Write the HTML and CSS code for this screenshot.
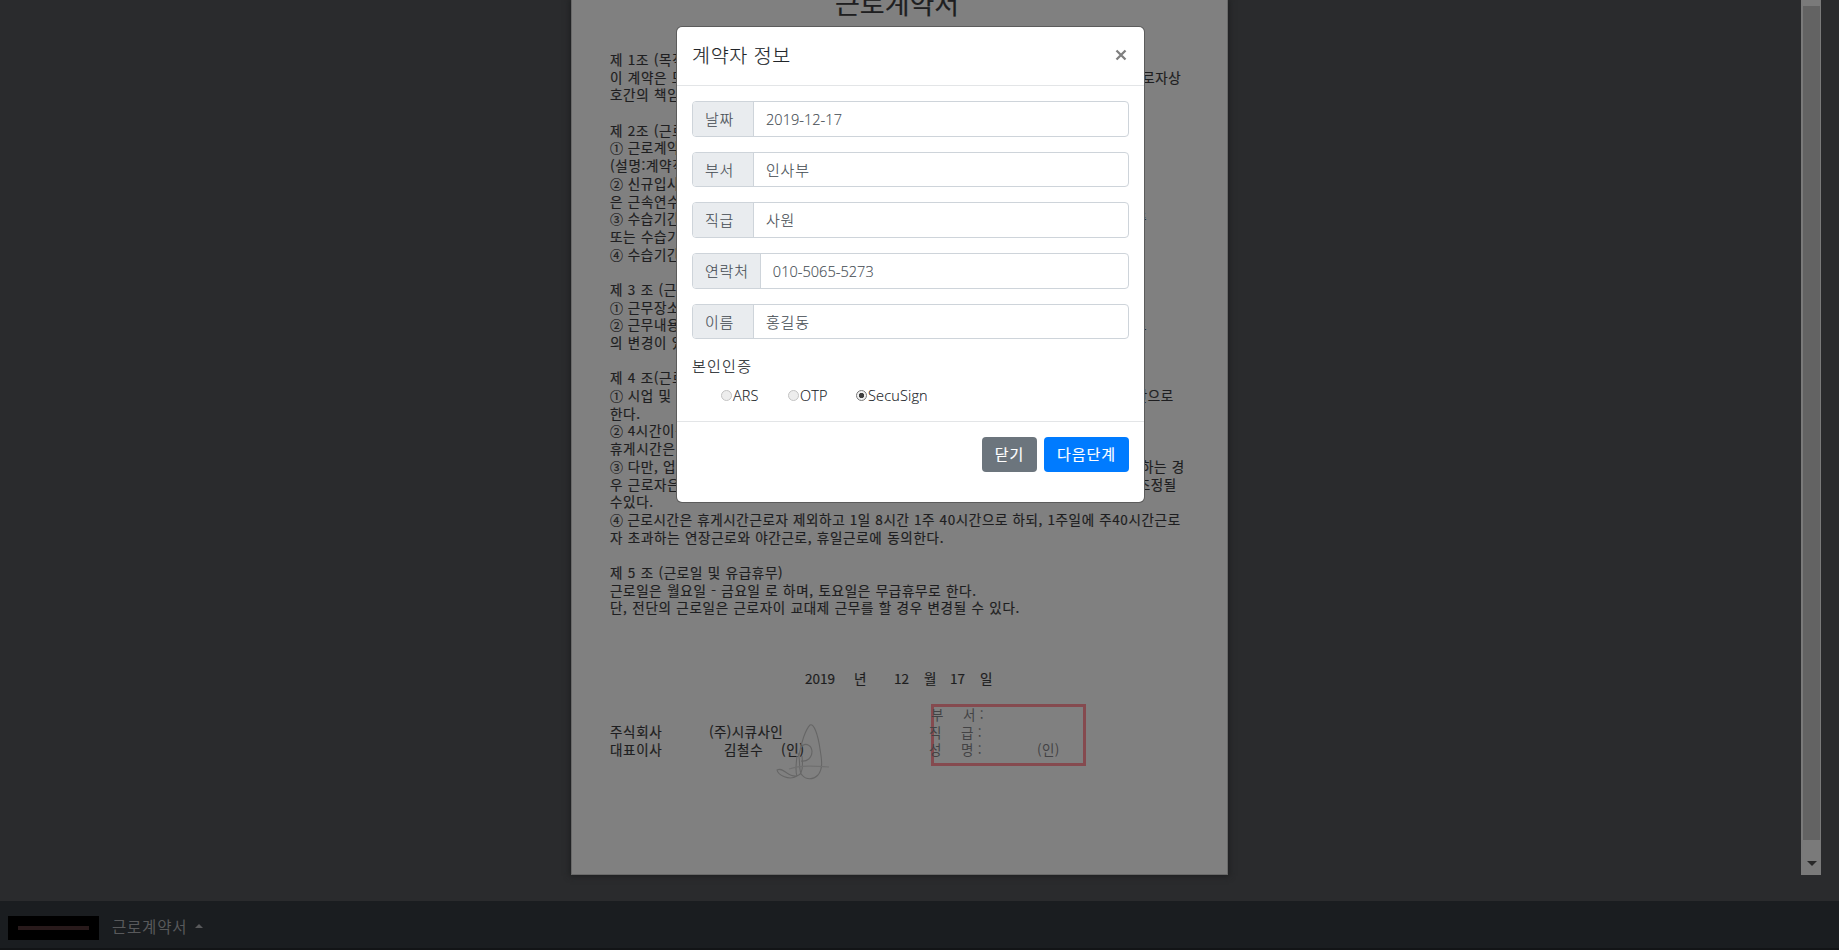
FILE: index.html
```html
<!DOCTYPE html>
<html lang="ko">
<head>
<meta charset="utf-8">
<title>근로계약서</title>
<link rel="stylesheet" href="styles.css">
</head>
<body>
<div class="app">
  <main class="viewer">
    <article class="page">
      <h1 class="title">근로계약서</h1>
      <p class="ln">제 1조 (목적)</p>
      <p class="ln split"><span>이 계약은 모</span><span>로자상</span></p>
      <p class="ln">호간의 책임</p>
      <p class="ln"></p>
      <p class="ln">제 2조 (근로</p>
      <p class="ln"><i class="num">①</i> 근로계약</p>
      <p class="ln">(설명:계약직</p>
      <p class="ln"><i class="num">②</i> 신규입사</p>
      <p class="ln">은 근속연수</p>
      <p class="ln split to-1148"><span><i class="num">③</i> 수습기간</span><span>중</span></p>
      <p class="ln">또는 수습기</p>
      <p class="ln"><i class="num">④</i> 수습기간</p>
      <p class="ln"></p>
      <p class="ln">제 3 조 (근로</p>
      <p class="ln"><i class="num">①</i> 근무장소</p>
      <p class="ln split to-1148"><span><i class="num">②</i> 근무내용</span><span>로</span></p>
      <p class="ln">의 변경이 있</p>
      <p class="ln"></p>
      <p class="ln">제 4 조(근로</p>
      <p class="ln split to-1174"><span><i class="num">①</i> 시업 및</span><span>간으로</span></p>
      <p class="ln">한다.</p>
      <p class="ln"><i class="num">②</i> 4시간이상</p>
      <p class="ln">휴게시간은</p>
      <p class="ln split to-1185"><span><i class="num">③</i> 다만, 업무</span><span>하는 경</span></p>
      <p class="ln split to-1177"><span>우 근로자은</span><span>조정될</span></p>
      <p class="ln">수있다.</p>
      <p class="ln dense"><i class="num">④</i> 근로시간은 휴게시간근로자 제외하고 1일 8시간 1주 40시간으로 하되, 1주일에 주40시간근로</p>
      <p class="ln">자 초과하는 연장근로와 야간근로, 휴일근로에 동의한다.</p>
      <p class="ln"></p>
      <p class="ln">제 5 조 (근로일 및 유급휴무)</p>
      <p class="ln">근로일은 월요일 - 금요일 로 하며, 토요일은 무급휴무로 한다.</p>
      <p class="ln">단, 전단의 근로일은 근로자이 교대제 근무를 할 경우 변경될 수 있다.</p>
      <div class="date"><span>2019</span><span>년</span><span>12</span><span>월</span><span>17</span><span>일</span></div>
      <section class="parties">
        <div class="company">
          <div class="ln party"><span>주식회사</span><span class="firm">(주)시큐사인</span></div>
          <div class="ln party"><span>대표이사</span><span class="ceo">김철수</span><span>(인)</span></div>
          <svg class="sign" viewBox="0 0 56 60" width="56" height="60">
            <path d="M24 36C26 22 31 9 35 5c4-2 8 10 10 24 2 12 3 20-2 26-5 5-12 5-16 0-4-4-1-14-4-22 M22 36c-1 9-2 16 0 20 6-1 6-11 5-20 M26 28c3-6 10-4 11 3 0 7-5 11-11 10 M22 56c-8 5-19-1-20-6 6-4 11 8 20 6"/>
            <path class="faint" d="M14 49c12-4 26-3 40-2"/>
          </svg>
        </div>
        <div class="signer">
          <div class="ln field"><span>부</span><span>서 :</span></div>
          <div class="ln field shift"><span>직</span><span>급 :</span></div>
          <div class="ln field shift"><span>성</span><span>명 :</span><span class="seal">(인)</span></div>
        </div>
      </section>
    </article>
    <div class="scrollbar"><div class="thumb"></div><i class="down"></i></div>
  </main>
  <nav class="navbar">
    <div class="logo"><i></i></div>
    <span class="nav-link">근로계약서</span><i class="caret"></i>
  </nav>
</div>

<div class="modal">
  <header class="modal-header">
    <h2>계약자 정보</h2>
    <svg width="12" height="12" viewBox="0 0 12 12"><path d="M1.500 1.500l9 9M10.500 1.500l-9 9"/></svg>
  </header>
  <div class="modal-body">
    <div class="group"><label>날짜</label><div class="control latin">2019-12-17</div></div>
    <div class="group"><label>부서</label><div class="control">인사부</div></div>
    <div class="group"><label>직급</label><div class="control">사원</div></div>
    <div class="group"><label>연락처</label><div class="control latin">010-5065-5273</div></div>
    <div class="group"><label>이름</label><div class="control">홍길동</div></div>
    <div class="auth">본인인증</div>
    <div class="radios">
      <span class="opt"><i class="radio"></i>ARS</span>
      <span class="opt"><i class="radio"></i>OTP</span>
      <span class="opt"><i class="radio on"></i>SecuSign</span>
    </div>
  </div>
  <footer class="modal-footer">
    <span class="btn gray">닫기</span>
    <span class="btn blue">다음단계</span>
  </footer>
</div>
</body>
</html>
```
FILE: styles.css
```css
* { box-sizing: border-box; }
body {
  margin: 0;
  overflow: hidden;
  background: #2a2b2d;
  font-family: "Open Sans", "Noto Sans CJK KR", sans-serif;
}
h1, h2, p { margin: 0; font-weight: 400; }
i { font-style: normal; }
.app { height: 950px; display: flex; flex-direction: column; }
.viewer {
  height: 901px;
  display: flex;
  justify-content: space-between;
  padding: 0 18px 26px 571px;
}

/* Contract sheet */
.page {
  width: 657px;
  height: 875px;
  padding-left: 38px;
  overflow: hidden;
  background: #808080;
  border: 1px solid #696969;
  border-top: 0;
  box-shadow: 0 0 6px 1px #1c1d1f;
  color: #1e1e20;
  font-family: "Noto Sans CJK KR", sans-serif;
  font-size: 13.5px;
  -webkit-text-stroke: .2px;
}
.title {
  height: 40px;
  margin: -17px 0 28px 225px;
  font-size: 27px;
  line-height: 40px;
  white-space: nowrap;
}
.ln {
  height: 17.700px;
  line-height: 17.700px;
  letter-spacing: .7px;
  word-spacing: .2px;
  white-space: pre;
}
.dense { letter-spacing: .64px; word-spacing: 0; }
.split { display: flex; justify-content: space-between; width: 571.500px; }
.to-1148 { width: 537px; }
.to-1174 { width: 564px; }
.to-1185 { width: 575px; }
.to-1177 { width: 567px; }
.num { display: inline-block; width: 13px; font-size: 13px; }
.date {
  display: grid;
  grid-template-columns: 49px 40px 30px 26px 30px 20px;
  margin: 52px 0 0 195px;
  line-height: 18px;
}
.parties { display: flex; margin-top: 17px; }
.company { position: relative; width: 321px; padding-top: 19px; }
.party { display: flex; }
.party span:first-child { width: 99px; }
.firm { letter-spacing: .4px; }
.party .ceo { width: 57px; margin-left: 15px; }
.sign { position: absolute; left: 165px; top: 16px; fill: none; stroke: #666; stroke-width: 1.1; }
.faint { stroke: #707070; }
.signer {
  width: 155px;
  height: 62px;
  border: 3px solid #854a4f;
  color: #434345;
  -webkit-text-stroke: 0;
}
.field { display: flex; margin-left: -3px; position: relative; top: -1px; word-spacing: -.8px; }
.field span:first-child { width: 32px; }
.field span:nth-child(2) { width: 24px; }
.shift { margin-left: -5px; }
.field .seal { margin-left: 52px; letter-spacing: .4px; }

/* Scrollbar */
.scrollbar {
  width: 20px;
  height: 875px;
  padding: 6px 1px 0 2px;
  background: #7a7a7a;
}
.thumb { height: 834px; background: #636363; }
.down {
  display: block;
  width: 0;
  margin: 21px auto 0;
  border: 5px solid transparent;
  border-top-color: #282828;
  border-bottom: 0;
}

/* Bottom bar */
.navbar {
  height: 49px;
  display: flex;
  align-items: center;
  padding: 2px 8px 0;
  background: #1a1d20;
  border-bottom: 2px solid #121416;
  color: #58595b;
}
.logo { width: 91px; height: 24px; margin-top: 5px; padding: 10px; background: #000; }
.logo i { display: block; height: 4px; background: #281a1b; }
.nav-link { margin: 1px 8px 0 13px; font-size: 15.5px; letter-spacing: .8px; }
.caret { border: 4px solid transparent; border-bottom-color: #58595b; border-top: 0; }

/* Dialog */
.modal {
  position: absolute;
  left: 677px;
  top: 27px;
  width: 467px;
  height: 475px;
  background: #fff;
  border-radius: 5px;
  box-shadow: 0 0 0 1px #5c5c5c;
  color: #212529;
  font-size: 15px;
  -webkit-text-stroke: .15px;
}
.modal-header {
  height: 59px;
  display: flex;
  justify-content: space-between;
  align-items: center;
  padding: 0 17px 3px 15px;
  border-bottom: 1px solid #e3e5e7;
}
.modal-header h2 { font-size: 19.5px; font-weight: 300; letter-spacing: .7px; }
.modal-header svg { stroke: #7f7f7f; stroke-width: 2.3; }
.modal-body { height: 336px; padding: 15px 15px 0; border-bottom: 1px solid #e3e5e7; }
.group {
  display: flex;
  height: 35.600px;
  margin-bottom: 15.100px;
  border: 1px solid #ced4da;
  border-radius: 4px;
  color: #495057;
  font-weight: 300;
  line-height: 35px;
  letter-spacing: .8px;
}
.group label {
  min-width: 61px;
  padding: 0 11px 0 12px;
  background: #e9ecef;
  border-right: 1px solid #ced4da;
  border-radius: 3px 0 0 3px;
}
.control { flex: 1; padding-left: 12px; }
.control.latin { font-size: 14.500px; letter-spacing: .04px; }
.auth { padding-top: 1px; line-height: 22px; letter-spacing: 1.250px; font-weight: 300; }
.radios { display: flex; padding: 8px 0 0 29px; font-size: 14.500px; line-height: 22px; font-weight: 300; }
.opt { display: flex; align-items: center; flex: none; min-width: 67px; letter-spacing: .15px; }
.radio {
  flex: none;
  width: 11px;
  height: 11px;
  margin: -2px 1px 0 0;
  border: 1px solid #c4c4c4;
  border-radius: 50%;
  background: #ededed;
}
.radio.on { margin-left: 1px; border-color: #777; background: radial-gradient(circle, #3e3e3e 2.3px, #f0f0f0 3px); }
.modal-footer { display: flex; justify-content: flex-end; gap: 7px; padding: 15px; }
.btn {
  height: 35px;
  border-radius: 4px;
  color: #fff;
  line-height: 35px;
  letter-spacing: 1px;
  text-align: center;
}
.gray { width: 55px; background: #6c757d; }
.blue { width: 85px; background: #007bff; }
```
